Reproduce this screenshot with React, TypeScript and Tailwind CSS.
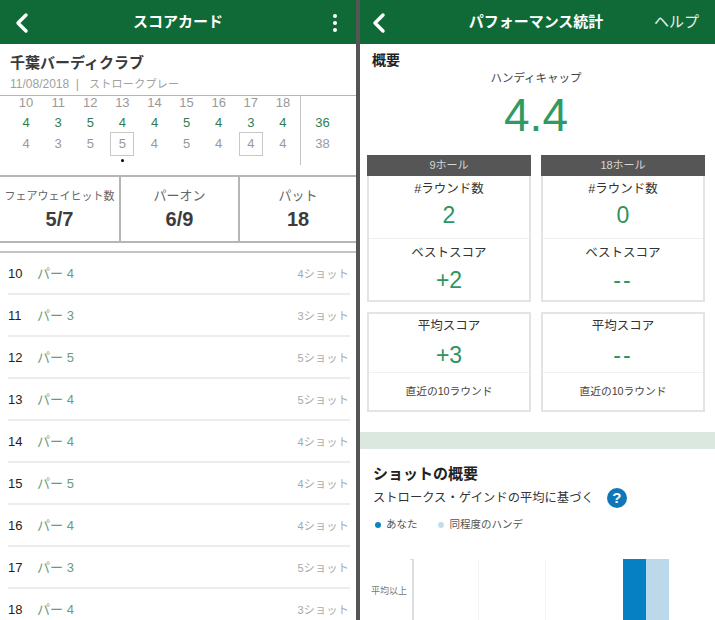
import { ChevronLeft } from "lucide-react";

const font = "font-['Liberation_Sans','Noto_Sans_CJK_JP',sans-serif]";

const holes = [10, 11, 12, 13, 14, 15, 16, 17, 18];
const pars = [4, 3, 5, 4, 4, 5, 4, 3, 4];
const scores = [4, 3, 5, 5, 4, 5, 4, 4, 4];
const shots = [4, 3, 5, 5, 4, 4, 4, 5, 3];

function Header({ title, right, chevron, titleClass }: { title: string; right: React.ReactNode; chevron: string; titleClass: string }) {
    return (
        <div className="h-[44px] shrink-0 bg-[#0f6a38] text-white flex items-center justify-between relative pt-[1px]">
            <ChevronLeft size={32} strokeWidth={2.6} className={chevron} />
            <div className={`absolute inset-x-0 text-center text-[15px] font-bold pointer-events-none ${titleClass}`}>
                {title}
            </div>
            {right}
        </div>
    );
}

function Stat({ label, value, className, small }: { label: string; value: string; className: string; small?: boolean }) {
    return (
        <div className={`flex flex-col items-center pt-[9px] ${className}`}>
            <div className={`h-[20px] flex items-center text-[#666] whitespace-nowrap ${small ? "text-[11px]" : "text-[13px]"}`}>
                {label}
            </div>
            <div className="text-[20px] leading-[26px] font-bold text-[#3c3c3c]">{value}</div>
        </div>
    );
}

function HoleRow({ hole, par, shot }: { hole: number; par: number; shot: number }) {
    return (
        <div className="h-[42px] shrink-0 ml-[8px] mr-[6px] border-b-2 border-[#ececec] flex items-center justify-between pr-[1px] pt-[2px]">
            <div className="flex items-center">
                <span className="w-[29px] text-[13px] text-[#222]">{hole}</span>
                <span className="text-[13px] text-[#6a9a80]">パー {par}</span>
            </div>
            <span className="text-[11px] text-[#a8a8a8] tracking-[0.3px]">{shot}ショット</span>
        </div>
    );
}

function Cell({ label, value, top, gap }: { label: string; value: string; top: string; gap: string }) {
    return (
        <div className="flex-1 flex flex-col items-center">
            <div className={`text-[12.5px] leading-[18px] text-[#333] ${top}`}>{label}</div>
            <div className={`text-[23px] leading-[28px] text-[#2e9460] ${gap} ${value === "--" ? "tracking-[2px]" : ""}`}>{value}</div>
        </div>
    );
}

function HoleCard({ title, rounds, best, avg }: { title: string; rounds: string; best: string; avg: string }) {
    return (
        <div className="w-[164px] flex flex-col">
            <div className="h-[21px] bg-[#565656] text-[#d8d8d8] text-[11px] flex items-center justify-center">{title}</div>
            <div className="h-[126px] border-2 border-t-0 border-[#e4e4e4] flex flex-col">
                <div className="h-[63px] border-b border-[#f0f0f0] flex">
                    <Cell label="#ラウンド数" value={rounds} top="mt-[4px]" gap="mt-[3px]" />
                </div>
                <div className="flex-1 flex">
                    <Cell label="ベストスコア" value={best} top="mt-[5px]" gap="mt-[4px]" />
                </div>
            </div>
            <div className="h-[100px] mt-[10px] border-2 border-[#e4e4e4] flex flex-col">
                <div className="h-[59px] border-b border-[#f0f0f0] flex">
                    <Cell label="平均スコア" value={avg} top="mt-[3px]" gap="mt-[6px]" />
                </div>
                <div className="flex-1 flex items-center justify-center text-[10.75px] text-[#444]">直近の10ラウンド</div>
            </div>
        </div>
    );
}

export default function App() {
    return (
        <div className={`${font} w-[715px] h-[620px] overflow-hidden flex bg-white`}>
            <div className="w-[356px] shrink-0 flex flex-col overflow-hidden">
                <Header
                    title="スコアカード"
                    chevron="ml-[6px]"
                    titleClass=""
                    right={
                        <div className="mr-[19px] flex flex-col gap-[3px]">
                            <span className="w-[4px] h-[4px] rounded-full bg-white" />
                            <span className="w-[4px] h-[4px] rounded-full bg-white" />
                            <span className="w-[4px] h-[4px] rounded-full bg-white" />
                        </div>
                    }
                />
                <div className="h-[52px] shrink-0 border-b border-[#b5b5b5] px-[10px] pt-[9px]">
                    <div className="text-[15px] leading-[20px] font-bold text-[#3a3a3a]">千葉バーディクラブ</div>
                    <div className="text-[12px] leading-[14px] mt-[4px] text-[#a0a0a0] flex">
                        <span>11/08/2018&nbsp;&nbsp;|</span>
                        <span className="ml-[10px] text-[11px] tracking-[0.3px]">ストロークプレー</span>
                    </div>
                </div>
                <div className="h-[81px] shrink-0 border-b-2 border-[#b5b5b5] flex pl-[10px]">
                    <div className="w-[290px] shrink-0 grid grid-cols-9 grid-rows-[14px_25px_17px] justify-items-center items-center text-[13px] pr-[1px]">
                        {holes.map((h) => (
                            <div key={h} className="text-[#999]">{h}</div>
                        ))}
                        {pars.map((p, i) => (
                            <div key={i} className="text-[#2f7d52]">{p}</div>
                        ))}
                        {scores.map((s, i) => (
                            <div key={i} className={`relative w-[24px] h-[24px] flex items-center justify-center text-[#999] ${i === 3 || i === 7 ? "border border-[#c8c8c8]" : ""}`}>
                                {s}
                                {i === 3 && <span className="absolute top-[26px] w-[3px] h-[3px] rounded-full bg-black" />}
                            </div>
                        ))}
                    </div>
                    <div className="h-[69px] border-l border-[#c4c4c4] flex-1 grid grid-rows-[14px_25px_17px] justify-items-center items-center text-[13px] pr-[12px]">
                        <div />
                        <div className="text-[#2f7d52]">36</div>
                        <div className="text-[#999]">38</div>
                    </div>
                </div>
                <div className="h-[66px] shrink-0 border-b-2 border-[#b5b5b5] flex">
                    <Stat label="フェアウェイヒット数" value="5/7" small className="w-[121px] border-r-2 border-[#b5b5b5]" />
                    <Stat label="パーオン" value="6/9" className="w-[119px] border-r-2 border-[#b5b5b5]" />
                    <Stat label="パット" value="18" className="flex-1" />
                </div>
                <div className="h-[10px] shrink-0 border-b-2 border-[#c4c4c4]" />
                {holes.map((h, i) => (
                    <HoleRow key={h} hole={h} par={pars[i]} shot={shots[i]} />
                ))}
            </div>

            <div className="w-[4px] shrink-0 bg-[#555]" />

            <div className="flex-1 flex flex-col overflow-hidden">
                <Header
                    title="パフォーマンス統計"
                    chevron="ml-[3px]"
                    titleClass="pr-[3px]"
                    right={<span className="ml-auto mr-[16px] text-[15px] text-[#e6f0ea]">ヘルプ</span>}
                />
                <div className="px-[12px] text-[14px] leading-[20px] mt-[6px] font-bold text-[#222]">概要</div>
                <div className="text-center text-[11.5px] leading-[16px] text-[#444] pr-[3px]">ハンディキャップ</div>
                <div className="text-center text-[46px] leading-[50px] text-[#2f9a63] mt-[4px] pr-[3px]">4.4</div>
                <div className="flex gap-[10px] px-[7px] mt-[15px]">
                    <HoleCard title="9ホール" rounds="2" best="+2" avg="+3" />
                    <HoleCard title="18ホール" rounds="0" best="--" avg="--" />
                </div>
                <div className="h-[17px] shrink-0 mt-[20px] bg-[#dbe8df]" />
                <div className="px-[13px] mt-[15px]">
                    <div className="text-[15px] leading-[20px] font-bold text-[#222]">ショットの概要</div>
                    <div className="flex items-center mt-[4px] text-[12.3px] text-[#333]">
                        <span>ストロークス・ゲインドの平均に基づく</span>
                        <span className="ml-[13px] w-[20px] h-[20px] rounded-full bg-[#0f76b8] text-white text-[15px] font-bold flex items-center justify-center">?</span>
                    </div>
                    <div className="flex items-center mt-[9px] pl-[2px] text-[10.5px] text-[#555]">
                        <span className="w-[6px] h-[6px] rounded-full bg-[#0a85c2]" />
                        <span className="ml-[5px]">あなた</span>
                        <span className="ml-[20px] w-[6px] h-[6px] rounded-full bg-[#c4dded]" />
                        <span className="ml-[6px]">同程度のハンデ</span>
                    </div>
                </div>
                <div className="flex mt-[26px] pl-[11px] h-[70px] shrink-0">
                    <div className="w-[41px] pt-[26px] text-[9px] text-[#777] whitespace-nowrap">平均以上</div>
                    <div className="relative w-[2px] h-full bg-[#ddd]">
                        <span className="absolute -left-[2px] top-0 w-[2px] h-[1px] bg-[#ddd]" />
                    </div>
                    <div className="w-[65px] border-r border-[#f4f4f4]" />
                    <div className="w-[67px] border-r border-[#f4f4f4]" />
                    <div className="w-[77px]" />
                    <div className="w-[23px] bg-[#0680c2]" />
                    <div className="w-[23px] bg-[#bcd9ec]" />
                </div>
            </div>
        </div>
    );
}
